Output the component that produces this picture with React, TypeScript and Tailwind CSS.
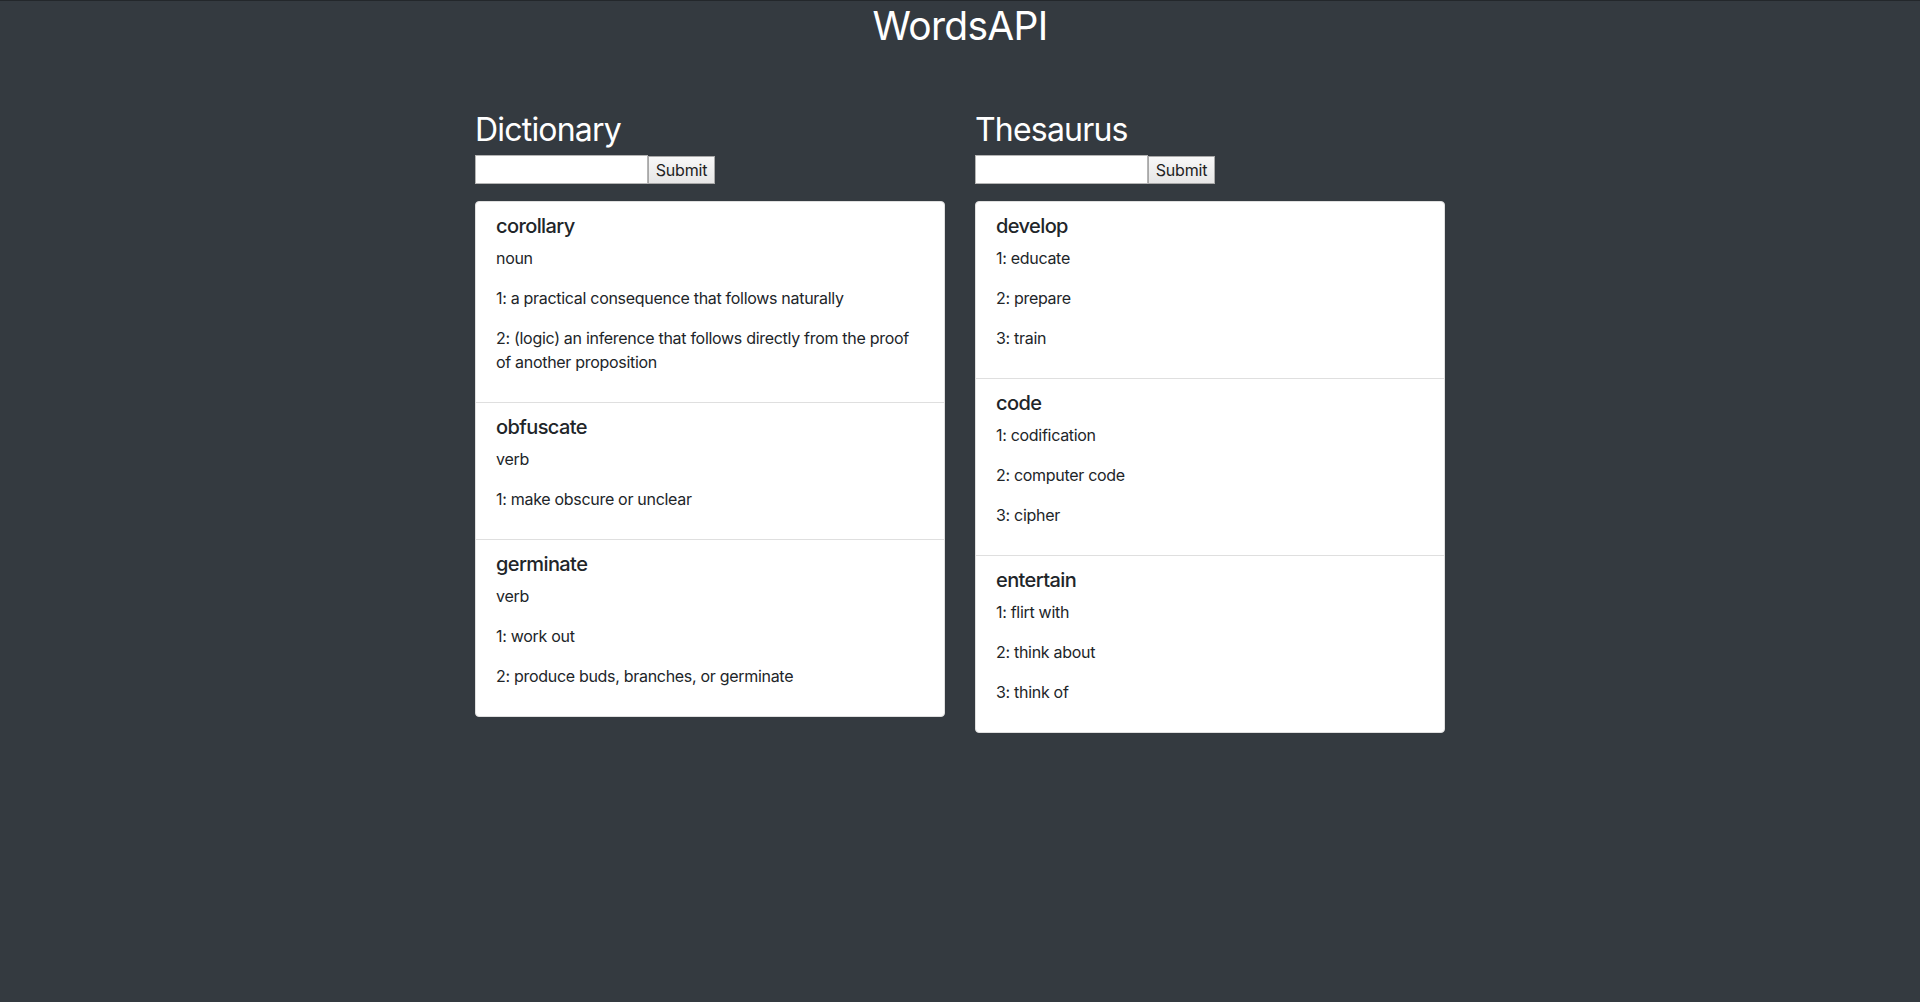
import React from "react";

type Entry = { word: string; pos?: string; defs: string[] };

const dictionary: Entry[] = [
  {
    word: "corollary",
    pos: "noun",
    defs: [
      "a practical consequence that follows naturally",
      "(logic) an inference that follows directly from the proof of another proposition",
    ],
  },
  { word: "obfuscate", pos: "verb", defs: ["make obscure or unclear"] },
  {
    word: "germinate",
    pos: "verb",
    defs: ["work out", "produce buds, branches, or germinate"],
  },
];

const thesaurus: Entry[] = [
  { word: "develop", defs: ["educate", "prepare", "train"] },
  { word: "code", defs: ["codification", "computer code", "cipher"] },
  { word: "entertain", defs: ["flirt with", "think about", "think of"] },
];

function Column({ title, entries }: { title: string; entries: Entry[] }) {
  return (
    <div className="w-[470px]">
      <h2 className="text-[32px] leading-[38px] font-normal text-white mb-[6px] tracking-[-0.8px]">{title}</h2>
      <form className="flex items-center h-[29px]" onSubmit={(e) => e.preventDefault()}>
        <input
          type="text"
          className="w-[173px] h-[29px] bg-white border border-[#b5b5b5] outline-none px-1 text-[16px]"
        />
        <button
          type="submit"
          className="h-[28px] mt-[1px] px-[6px] w-[67px] text-[16px] leading-none text-[#222] tracking-[-0.2px] bg-gradient-to-b from-[#f8f8f8] to-[#e6e6e6] border border-[#a8a8a8]"
        >
          Submit
        </button>
      </form>
      <div className="mt-[17px] bg-white border border-[#dfdfdf] rounded-[4px] overflow-hidden">
        {entries.map((e, i) => (
          <div
            key={e.word}
            className={`px-[20px] pt-[12px] pb-[12px] ${i > 0 ? "border-t border-[#dfdfdf]" : ""}`}
          >
            <h5 className="text-[20px] leading-[24px] font-medium text-[#212529] mb-[8px] tracking-[-0.6px]">{e.word}</h5>
            {e.pos && (
              <p className="text-[16px] leading-[24px] text-[#212529] mb-[16px] tracking-[-0.3px]">{e.pos}</p>
            )}
            {e.defs.map((d, j) => (
              <p key={j} className="text-[16px] leading-[24px] text-[#212529] mb-[16px] tracking-[-0.3px]">
                {j + 1}: {d}
              </p>
            ))}
          </div>
        ))}
      </div>
    </div>
  );
}

export default function App() {
  return (
    <div
      className="min-h-[1002px] bg-[#343a40] border-t border-[#23272b]"
      style={{ fontFamily: "Inter, 'Noto Sans', 'Liberation Sans', sans-serif" }}
    >
      <h1 className="text-center text-white text-[39px] leading-[47px] font-normal tracking-[-0.7px] pt-[1px]">
        WordsAPI
      </h1>
      <div className="flex justify-center gap-[30px] mt-[62px]">
        <Column title="Dictionary" entries={dictionary} />
        <Column title="Thesaurus" entries={thesaurus} />
      </div>
    </div>
  );
}
